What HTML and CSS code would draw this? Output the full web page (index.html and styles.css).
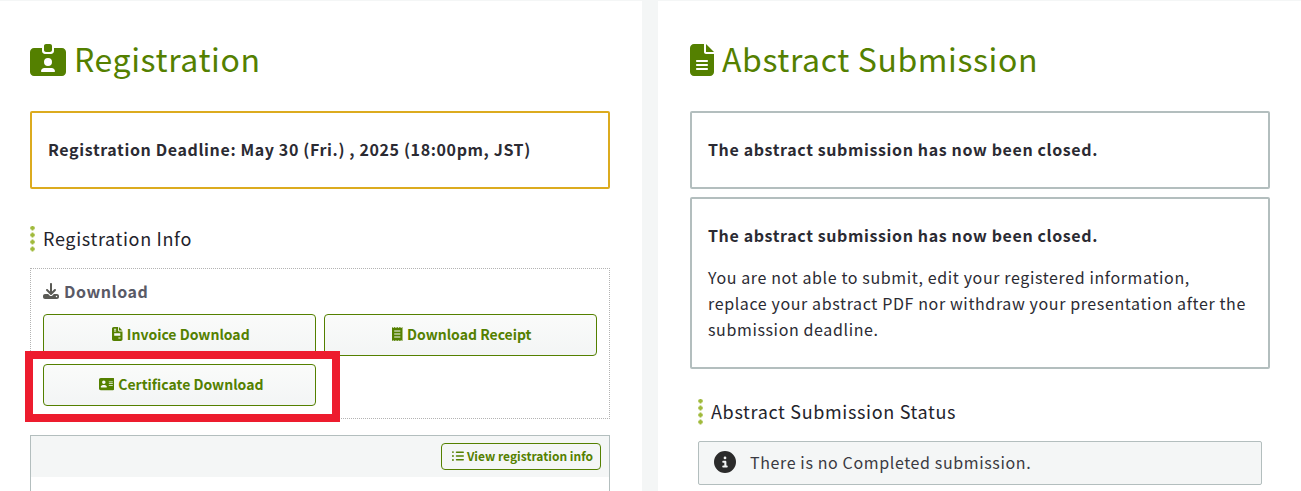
FILE: index.html
```html
<!DOCTYPE html>
<html>
<head>
    <meta charset="UTF-8">
    <meta name="viewport" content="width=device-width, initial-scale=1.0">
    <link rel="stylesheet" href="styles.css">
</head>
<body>
    <div class="page">
        <section class="card card-left">
            <h2 class="title">
                <svg class="title-icon icon-badge" viewBox="0 0 576 512"><path d="M256 0h64c17.7 0 32 14.3 32 32V96c0 17.7-14.3 32-32 32H256c-17.7 0-32-14.3-32-32V32c0-17.7 14.3-32 32-32zM64 64H192v48c0 26.5 21.5 48 48 48h96c26.5 0 48-21.5 48-48V64H512c35.3 0 64 28.7 64 64V448c0 35.3-28.7 64-64 64H64c-35.3 0-64-28.7-64-64V128C0 92.7 28.7 64 64 64zM176 437.3c0 5.9 4.8 10.7 10.7 10.7H389.3c5.9 0 10.7-4.8 10.7-10.7c0-29.5-23.9-53.3-53.3-53.3H229.3c-29.5 0-53.3 23.9-53.3 53.3zM288 352a64 64 0 1 0 0-128 64 64 0 1 0 0 128z"/></svg>
                Registration
            </h2>
            <div class="notice notice-gold"><strong>Registration Deadline: May 30 (Fri.) , 2025 (18:00pm, JST)</strong></div>

            <h3 class="subhead">Registration Info</h3>
            <div class="download-box">
                <div class="download-label">
                    <svg class="label-icon" viewBox="0 0 512 512"><path d="M288 32c0-17.7-14.3-32-32-32s-32 14.3-32 32V274.7l-73.4-73.4c-12.5-12.5-32.8-12.5-45.3 0s-12.5 32.8 0 45.3l128 128c12.5 12.5 32.8 12.5 45.3 0l128-128c12.5-12.5 12.5-32.8 0-45.3s-32.8-12.5-45.3 0L288 274.7V32zM64 352c-35.3 0-64 28.7-64 64v32c0 35.3 28.7 64 64 64H448c35.3 0 64-28.7 64-64V416c0-35.3-28.7-64-64-64H346.5l-45.3 45.3c-25 25-65.5 25-90.5 0L165.5 352H64zm368 56a24 24 0 1 1 0 48 24 24 0 1 1 0-48z"/></svg>
                    Download
                </div>
                <div class="button-grid">
                    <a class="btn">
                        <svg class="btn-icon" viewBox="0 0 384 512"><path fill-rule="evenodd" d="M64 0C28.7 0 0 28.7 0 64V448c0 35.3 28.7 64 64 64H320c35.3 0 64-28.7 64-64V160H256c-17.7 0-32-14.3-32-32V0H64zM256 0V128H384L256 0zM72 64h80v32H72zM72 128h80v32H72zM80 224H304v96H80zM232 384h80v32H232z"/></svg>
                        Invoice Download
                    </a>
                    <a class="btn">
                        <svg class="btn-icon" viewBox="0 0 384 512"><path fill-rule="evenodd" d="M0 0L48 32 96 0l48 32 48-32 48 32 48-32 48 32 48-32V512L336 480l-48 32-48-32-48 32-48-32-48 32-48-32L0 512zM80 128v40H304V128zM80 236v40H304V236zM80 344v40H304V344z"/></svg>
                        Download Receipt
                    </a>
                    <a class="btn">
                        <svg class="btn-icon" viewBox="0 0 576 512"><path d="M64 32C28.7 32 0 60.7 0 96v320c0 35.3 28.7 64 64 64h448c35.3 0 64-28.7 64-64V96c0-35.3-28.7-64-64-64H64zm80 256h64c44.2 0 80 35.8 80 80c0 8.8-7.2 16-16 16H80c-8.8 0-16-7.2-16-16c0-44.2 35.8-80 80-80zm-32-96a64 64 0 1 1 128 0 64 64 0 1 1-128 0zm256-32H496c8.8 0 16 7.2 16 16s-7.2 16-16 16H368c-8.8 0-16-7.2-16-16s7.2-16 16-16zm0 64H496c8.8 0 16 7.2 16 16s-7.2 16-16 16H368c-8.8 0-16-7.2-16-16s7.2-16 16-16zm0 64H496c8.8 0 16 7.2 16 16s-7.2 16-16 16H368c-8.8 0-16-7.2-16-16s7.2-16 16-16z"/></svg>
                        Certificate Download
                    </a>
                </div>
            </div>

            <div class="info-panel">
                <div class="info-panel-head">
                    <a class="btn-small">
                        <svg class="small-icon" viewBox="0 0 512 512"><path d="M40 48a40 40 0 1 1 0 80 40 40 0 1 1 0-80zM40 216a40 40 0 1 1 0 80 40 40 0 1 1 0-80zM40 384a40 40 0 1 1 0 80 40 40 0 1 1 0-80zM192 64H480c17.7 0 32 14.3 32 32s-14.3 32-32 32H192c-17.7 0-32-14.3-32-32s14.3-32 32-32zM192 224H480c17.7 0 32 14.3 32 32s-14.3 32-32 32H192c-17.7 0-32-14.3-32-32s14.3-32 32-32zM192 384H480c17.7 0 32 14.3 32 32s-14.3 32-32 32H192c-17.7 0-32-14.3-32-32s14.3-32 32-32z"/></svg>
                        View registration info
                    </a>
                </div>
            </div>

            <!-- annotation drawn on top of the screenshot -->
            <div class="red-mark"></div>
        </section>

        <section class="card card-right">
            <h2 class="title">
                <svg class="title-icon icon-file" viewBox="0 0 384 512"><path d="M64 0C28.7 0 0 28.7 0 64V448c0 35.3 28.7 64 64 64H320c35.3 0 64-28.7 64-64V160H256c-17.7 0-32-14.3-32-32V0H64zM256 0V128H384L256 0zM112 256H272c8.8 0 16 7.2 16 16s-7.2 16-16 16H112c-8.8 0-16-7.2-16-16s7.2-16 16-16zm0 64H272c8.8 0 16 7.2 16 16s-7.2 16-16 16H112c-8.8 0-16-7.2-16-16s7.2-16 16-16zm0 64H272c8.8 0 16 7.2 16 16s-7.2 16-16 16H112c-8.8 0-16-7.2-16-16s7.2-16 16-16z"/></svg>
                Abstract Submission
            </h2>
            <div class="notice notice-grey"><strong>The abstract submission has now been closed.</strong></div>
            <div class="notice-long">
                <strong>The abstract submission has now been closed.</strong>
                <p>You are not able to submit, edit your registered information, replace your abstract PDF nor withdraw your presentation after the submission deadline.</p>
            </div>

            <h3 class="subhead subhead-status">Abstract Submission Status</h3>
            <div class="status">
                <svg class="status-icon" viewBox="0 0 512 512"><path d="M256 512A256 256 0 1 0 256 0a256 256 0 1 0 0 512zM216 336h24V272H216c-13.3 0-24-10.7-24-24s10.7-24 24-24h48c13.3 0 24 10.7 24 24v88h8c13.3 0 24 10.7 24 24s-10.7 24-24 24H216c-13.3 0-24-10.7-24-24s10.7-24 24-24zm40-208a32 32 0 1 1 0 64 32 32 0 1 1 0-64z"/></svg>
                There is no Completed submission.
            </div>
        </section>
    </div>
</body>
</html>
```
FILE: styles.css
```css
* {
    box-sizing: border-box;
}

html,
body {
    height: 100%;
}

body {
    margin: 0;
    overflow: hidden;
    background-color: #f4f6f6;
    color: #2b2b33;
    font-family: "Noto Sans CJK JP", "Noto Sans", sans-serif;
    letter-spacing: 0.62px;
}

.page {
    display: flex;
    gap: 16px;
    padding-top: 1px;
    height: 491px;
    overflow: hidden;
}

.card {
    position: relative;
    background-color: #fff;
    padding-top: 35px;
}

.card-left {
    width: 642px;
    padding-left: 30px;
    padding-right: 32px;
}

.card-right {
    width: 643px;
    padding-left: 32px;
    padding-right: 31px;
}

.title {
    display: flex;
    align-items: center;
    gap: 8px;
    height: 46px;
    margin: 0 0 29px;
    padding-bottom: 2px;
    color: #548000;
    font-size: 32px;
    font-weight: 400;
    letter-spacing: 0.6px;
    line-height: 44px;
}

.title-icon {
    flex: none;
    height: 32px;
    margin-top: 4px;
    fill: #548000;
}

.icon-badge {
    width: 36px;
}

.icon-file {
    width: 24px;
}

.notice {
    display: flex;
    align-items: center;
    height: 78px;
    padding: 0 16px 2px;
    border: 2px solid #b3bebe;
    border-radius: 2px;
    font-size: 16px;
}

.notice-gold {
    border-color: #dcab1f;
}

.notice strong,
.notice-long strong {
    font-weight: 700;
}

.notice-long {
    height: 172px;
    margin-top: 8px;
    padding: 23px 16px 0;
    border: 2px solid #b3bebe;
    border-radius: 2px;
    font-size: 16px;
    line-height: 26px;
}

.notice-long p {
    margin: 16px 0 0;
}

.subhead {
    margin: 37px 0 16px;
    padding-left: 13px;
    height: 26px;
    background-image: radial-gradient(circle, #a0ba3c 2px, transparent 2.4px);
    background-size: 5px 7px;
    background-repeat: repeat-y;
    background-position: 0 -1.5px;
    color: #23232b;
    font-size: 18px;
    font-weight: 400;
    letter-spacing: 0.66px;
    line-height: 24px;
}

.subhead-status {
    margin: 30px 0 16px 8px;
}

.download-box {
    height: 151px;
    padding: 12px 12px 0;
    border: 1px dotted #b3b3b3;
}

.download-label {
    display: flex;
    align-items: center;
    gap: 5px;
    height: 22px;
    margin-bottom: 11px;
    padding-bottom: 2px;
    color: #5a5a66;
    font-size: 16px;
    font-weight: 700;
    letter-spacing: 0.55px;
}

.label-icon {
    width: 16px;
    height: 16px;
    fill: #5a5a55;
}

.button-grid {
    display: grid;
    grid-template-columns: 273px 273px;
    gap: 8px;
}

.btn {
    display: flex;
    align-items: center;
    justify-content: center;
    gap: 4px;
    height: 42px;
    padding: 0 0 2px 3px;
    border: 1px solid #548000;
    border-radius: 4px;
    background: linear-gradient(#fafbfa, #f3f5f5);
    color: #548000;
    font-size: 14px;
    font-weight: 700;
    letter-spacing: 0;
}

.btn-icon {
    height: 14px;
    width: auto;
    max-width: 16px;
    fill: #548000;
}

.info-panel {
    height: 100px;
    margin-top: 16px;
    border: 1px solid #b3bebe;
}

.info-panel-head {
    display: flex;
    justify-content: flex-end;
    height: 41px;
    padding: 7px 8px 0 0;
    background-color: #f4f6f6;
}

.btn-small {
    display: flex;
    align-items: center;
    gap: 3px;
    height: 27px;
    padding: 0 7px 2px 10px;
    border: 1px solid #548000;
    border-radius: 4px;
    color: #548000;
    font-size: 12px;
    font-weight: 700;
    letter-spacing: 0;
}

.small-icon {
    width: 12px;
    height: 12px;
    fill: #548000;
}

.red-mark {
    position: absolute;
    left: 25px;
    top: 350px;
    width: 315px;
    height: 71px;
    border: 8px solid #ed1c2e;
}

.status {
    display: flex;
    align-items: center;
    gap: 14px;
    height: 44px;
    margin-left: 8px;
    margin-right: 8px;
    padding: 0 0 2px 15px;
    border: 1px solid #b3bebe;
    border-radius: 2px;
    background-color: #f4f6f6;
    color: #3a3a42;
    font-size: 16px;
    letter-spacing: 0.62px;
}

.status-icon {
    width: 22px;
    height: 22px;
    fill: #2b2b2b;
}
```
